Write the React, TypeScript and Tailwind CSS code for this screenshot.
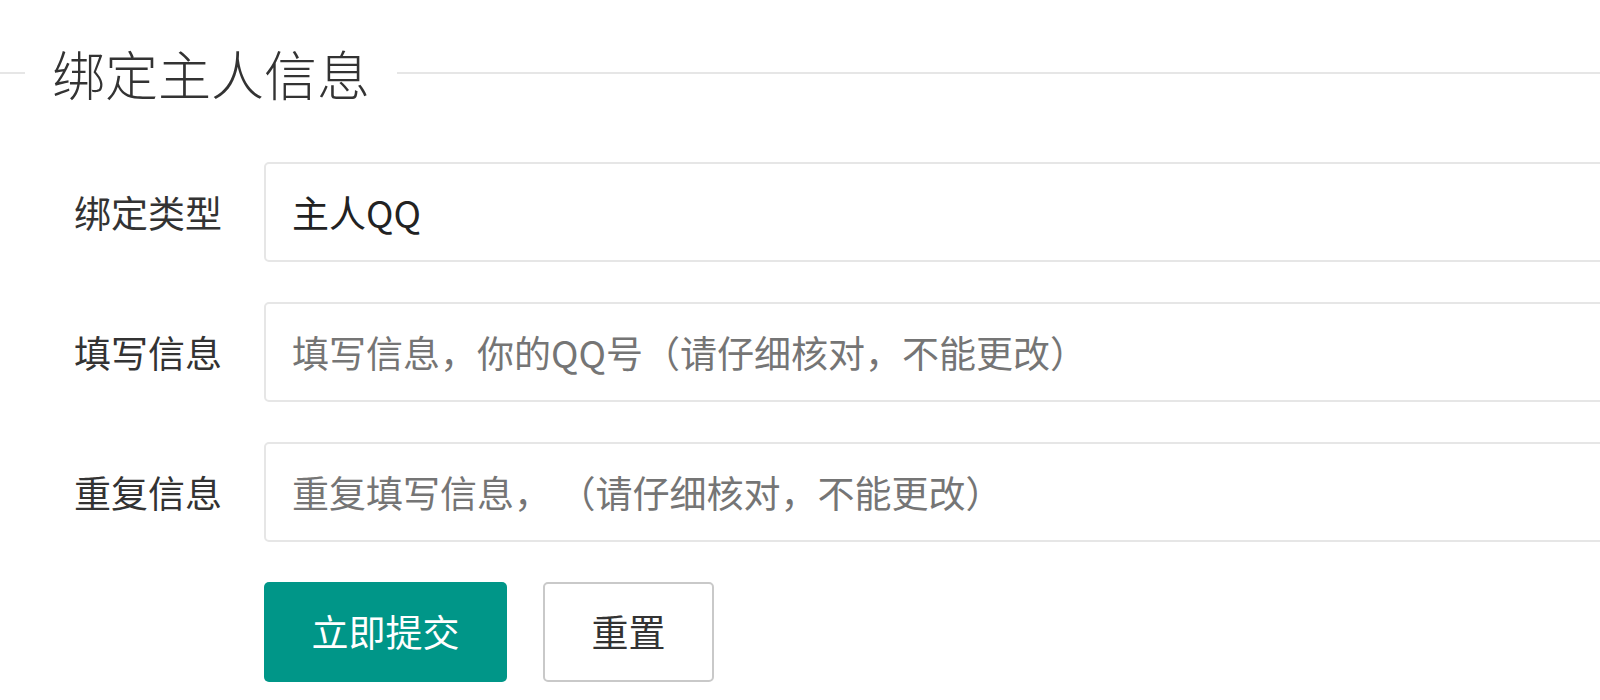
const rows = [
  { label: "绑定类型", value: "主人QQ", placeholder: "" },
  { label: "填写信息", value: "", placeholder: "填写信息，你的QQ号（请仔细核对，不能更改）" },
  { label: "重复信息", value: "", placeholder: "重复填写信息，\u2009（请仔细核对，不能更改）" },
];

const font = "font-['Microsoft_YaHei','Noto_Sans_CJK_SC','Noto_Sans',sans-serif]";

export default function App() {
  return (
    <div className={`w-[1600px] h-[700px] overflow-hidden bg-white text-[#333] ${font}`}>
      {/* Fieldset title */}
      <div className="mt-[43px] flex h-[60px] items-center">
        <div className="h-[2px] w-[25px] bg-[#e6e6e6]" />
        <h2 className="px-[27px] text-[53px] font-light leading-none text-[#333]">绑定主人信息</h2>
        <div className="h-[2px] flex-1 bg-[#e6e6e6]" />
      </div>

      {/* Form */}
      <form className="mt-[59px] flex flex-col gap-[40px]">
        {rows.map((row) => (
          <div key={row.label} className="flex items-center">
            <label className="w-[264px] shrink-0 pr-[42px] text-right text-[37px] leading-none text-[#333]">
              {row.label}
            </label>
            <input
              readOnly
              defaultValue={row.value}
              placeholder={row.placeholder}
              className="h-[100px] w-[1400px] shrink-0 rounded-[5px] border-2 border-[#e6e6e6] bg-white pl-[26px] text-[37px] text-[#222] outline-none placeholder:text-[#757575]"
            />
          </div>
        ))}

        <div className="flex items-center gap-[36px] pl-[264px]">
          <button
            type="button"
            className="h-[100px] w-[243px] rounded-[5px] bg-[#009688] text-[37px] text-white"
          >
            立即提交
          </button>
          <button
            type="button"
            className="h-[100px] w-[171px] rounded-[5px] border-2 border-[#c9c9c9] bg-white text-[37px] text-[#333]"
          >
            重置
          </button>
        </div>
      </form>
    </div>
  );
}
